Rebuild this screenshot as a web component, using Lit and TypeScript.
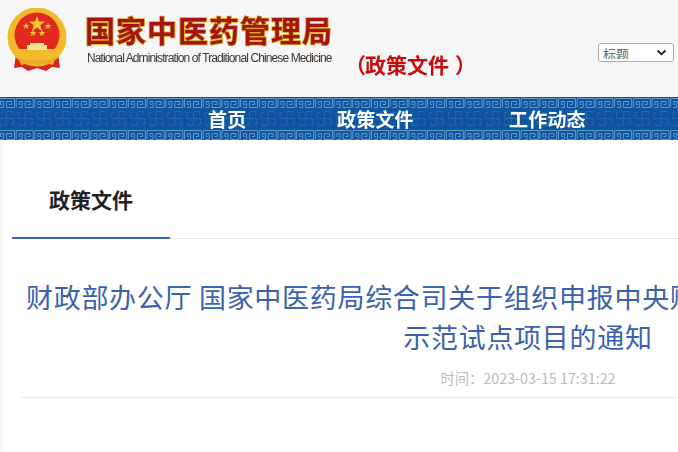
import { LitElement, html, css, svg } from "lit";
import { customElement } from "lit/decorators.js";

const cjk = css`"Noto Sans CJK SC", "Noto Sans", sans-serif`;

const keyTile = svg`<path d="M0.5 9.5V0.5H17.5V9.5H9.5V3.5H14.5V6.5H12M3 9.5H6.5V3.5H3.5V6.5H5" fill="none" stroke="#6598cc" stroke-width="1"/>`;
const midTile = svg`<path d="M9.5 2.5V16.5M2.5 9.5H16.5M9.5 2.5H15.5V5M16.5 9.5V15.5H14M9.5 16.5H3.5V14M2.5 9.5V3.5H5" fill="none" stroke="#2767b0" stroke-width="1"/>`;
const smallStar = "M0-3.6 L0.9-1.1 H3.5 L1.4 0.5 L2.2 3 L0 1.5 L-2.2 3 L-1.4 0.5 L-3.5-1.1 H-0.9Z";

@customElement("app-root")
export class AppRoot extends LitElement {
  static styles = css`
    :host {
      display: block;
      width: 678px;
      height: 452px;
      overflow: hidden;
      background: #f6f6f6;
      font-family: ${cjk};
    }
    .top {
      height: 97px;
      display: flex;
      position: relative;
      box-sizing: border-box;
      padding: 8px 0 0 7px;
    }
    .emblem { width: 62px; height: 64px; flex: none; filter: blur(0.5px); }
    .brand {
      margin-left: 16px;
      padding-top: 3px;
      display: flex;
      flex-direction: column;
      filter: blur(0.4px);
      flex: none;
    }
    .cn {
      font-size: 30px;
      line-height: 36px;
      font-weight: 700;
      letter-spacing: 1px;
      color: #a51510;
      -webkit-text-stroke: 1.6px #d9a520;
      paint-order: stroke fill;
      white-space: nowrap;
    }
    .en {
      margin: 4px 0 0 2px;
      font-family: "Liberation Sans", sans-serif;
      font-size: 12px;
      line-height: 14px;
      letter-spacing: -0.89px;
      color: #40362e;
      white-space: nowrap;
    }
    .tag {
      margin-left: 18px;
      margin-top: 41px;
      font-size: 21px;
      line-height: 30px;
      font-weight: 700;
      color: #cc0a0a;
      white-space: nowrap;
      flex: none;
      filter: blur(0.2px);
    }
    .open { display: inline-block; margin: 0 -1px 0 -6px; }
    .close { display: inline-block; margin-left: 6px; }
    .field {
      position: absolute;
      left: 598px;
      top: 43px;
      width: 76px;
      height: 19px;
    }
    .sel {
      appearance: none;
      display: block;
      width: 100%;
      height: 100%;
      box-sizing: border-box;
      font-family: ${cjk};
      font-size: 13px;
      color: #666;
      background: #fff;
      border: 1px solid #aaa;
      border-radius: 3px;
      padding: 0 0 2px 4px;
      margin: 0;
    }
    .chev { position: absolute; left: 58px; top: 6px; width: 11px; height: 7px; }
    .nav {
      position: relative;
      height: 43px;
      background: #0d559f;
      overflow: hidden;
    }
    .nav svg { position: absolute; inset: 0; width: 100%; height: 100%; filter: blur(0.35px); }
    .links a {
      position: absolute;
      top: 0;
      line-height: 43px;
      font-size: 19px;
      letter-spacing: 0.2px;
      font-weight: 700;
      color: #fff;
      white-space: nowrap;
      filter: blur(0.25px);
    }
    .l1 { left: 208px; }
    .l2 { left: 337px; }
    .l3 { left: 509px; }
    .main {
      margin-left: 3px;
      background: #fff;
      height: 312px;
      overflow: hidden;
    }
    .tabs {
      margin-left: 9px;
      height: 99px;
      box-sizing: border-box;
      border-bottom: 1px solid #e6e6e6;
    }
    .tab {
      width: 158px;
      height: 99px;
      box-sizing: border-box;
      border-bottom: 2px solid #3f68b4;
      font-size: 21px;
      font-weight: 700;
      color: #222;
      line-height: 24px;
      padding: 47px 0 0 37px;
    }
    .article {
      margin-left: 18px;
      width: 1014px;
    }
    .title {
      margin: 0;
      padding-top: 38px;
      text-align: center;
      font-size: 27px;
      font-weight: 400;
      line-height: 40px;
      letter-spacing: 0.7px;
      color: #3a62ad;
    }
    .meta {
      box-sizing: border-box;
      padding-top: 11px;
      height: 41px;
      border-bottom: 1px solid #ececec;
      text-align: center;
      font-size: 14.3px;
      line-height: 20px;
      color: #bbb;
    }
  `;

  render() {
    const xs = Array.from({ length: 37 }, (_, i) => i * 18.7 - 3);
    return html`
      <div class="top">
        <svg class="emblem" viewBox="0 0 62 64" aria-label="国徽">
          <path d="M9 46 L7 60 L15 59 L21 63 L30 60 L39 63 L45 59 L53 60 L51 46Z" fill="#d8261c"/>
          <circle cx="30" cy="29" r="29.5" fill="#f2b92b"/>
          <circle cx="30" cy="27" r="22.5" fill="#e1291d"/>
          <path d="M8 41 H52 Q49 50 42 54 H18 Q11 50 8 41Z" fill="#f2bb2f"/>
          <path d="M20 42 V37 H23 V34 H37 V37 H40 V42Z" fill="#f9e08c"/>
          <path d="M22 33 H38 L39.5 35 H20.5Z" fill="#d62a1c"/>
          <path d="M11 49 Q21 55 30 51 Q39 55 49 49 L46 57 Q37 54 30 57 Q23 54 14 57Z" fill="#e9a926"/>
          <g fill="#f6c92f">
            <path d="M30 8 L32 13.6 H38 L33.2 17.2 L35 23 L30 19.5 L25 23 L26.8 17.2 L22 13.6 H28Z"/>
            <path d="${smallStar}" transform="translate(19 18)"/>
            <path d="${smallStar}" transform="translate(41 18)"/>
            <path d="${smallStar}" transform="translate(26 25)"/>
            <path d="${smallStar}" transform="translate(35 25)"/>
          </g>
        </svg>
        <div class="brand">
          <div class="cn">国家中医药管理局</div>
          <div class="en">National Administration of Traditional Chinese Medicine</div>
        </div>
        <div class="tag"><span class="open">（</span>政策文件<span class="close">）</span></div>
        <div class="field">
          <select class="sel"><option>标题</option></select>
          <svg class="chev" viewBox="0 0 11 7" aria-hidden="true"><path d="M1.5 1.5L5.5 5.2L9.5 1.5" fill="none" stroke="#222" stroke-width="1.8"/></svg>
        </div>
      </div>
      <nav class="nav">
        <svg aria-hidden="true">
          ${xs.map((x) => svg`<g transform="translate(${x} 1)">${keyTile}</g>`)}
          ${xs.map((x) => svg`<g transform="translate(${x} 12)">${midTile}</g>`)}
          ${xs.map((x) => svg`<g transform="translate(${x} 33)">${keyTile}</g>`)}
        </svg>
        <div class="links">
          <a class="l1">首页</a><a class="l2">政策文件</a><a class="l3">工作动态</a>
        </div>
      </nav>
      <main class="main">
        <div class="tabs"><div class="tab">政策文件</div></div>
        <article class="article">
          <h1 class="title">财政部办公厅 国家中医药局综合司关于组织申报中央财政支持中医药传承创新发展<br />示范试点项目的通知</h1>
          <div class="meta">时间：2023-03-15 17:31:22</div>
        </article>
      </main>
    `;
  }
}
